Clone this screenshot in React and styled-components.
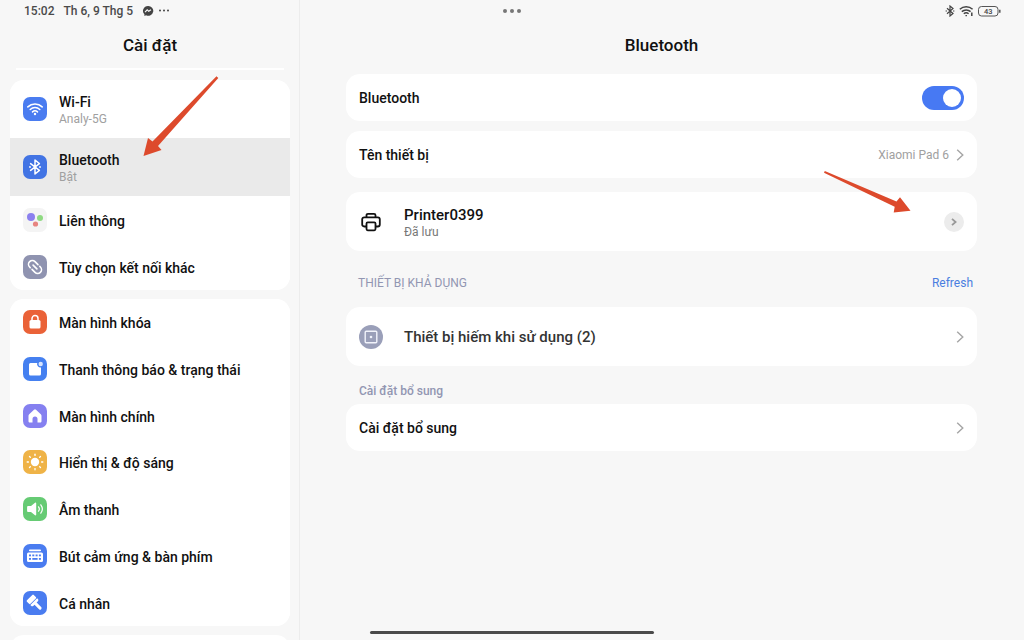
import React, { useState } from 'react'

import styled, { createGlobalStyle } from 'styled-components'

const GlobalStyle = createGlobalStyle`
    * {
        box-sizing: border-box;
    }
    body {
        margin: 0;
        background-color: #f7f7f7;
        font-family: Roboto, "Noto Sans", sans-serif;
        color: #111;
    }
    button, input {
        font-family: inherit;
        color: inherit;
    }
`
const Page = styled.div`
    position: relative;
    display: grid;
    grid-template-columns: 300px 1fr;
    height: 100vh;
    overflow: hidden;
`
const Sidebar = styled.aside`
    display: flex;
    flex-direction: column;
    padding: 0 9px 0 10px;
    border-right: 1px solid #ececec;
    overflow: hidden;
`
const Main = styled.main`
    display: flex;
    flex-direction: column;
    padding: 0 47px 0 46px;
    overflow: hidden;
`
const StatusBar = styled.div`
    display: flex;
    flex: none;
    align-items: center;
    justify-content: ${props => props.$end ? 'flex-end' : 'flex-start'};
    gap: ${props => props.$end ? '4px' : '9px'};
    height: 22px;
    padding-left: 14px;
    margin-right: ${props => props.$end ? '-24px' : '0'};
    font-size: 12px;
    font-weight: 500;
    color: #4a4a4a;
`
const Title = styled.h1`
    flex: none;
    margin: 0;
    padding-top: 1px;
    font-size: 17px;
    font-weight: 500;
    line-height: 45px;
    text-align: center;
`
const Divider = styled.hr`
    flex: none;
    width: calc(100% - 12px);
    height: 2px;
    margin: 0 auto 10px;
    border: none;
    background-color: #fff;
`
const Nav = styled.nav`
    display: flex;
    flex-direction: column;
    flex: none;
    gap: 9px;
`
const NavGroup = styled.div`
    display: grid;
    grid-auto-rows: ${props => props.$even ? '1fr' : 'auto'};
    min-height: ${props => props.$even ? '327px' : '40px'};
    border-radius: 14px;
    background-color: #fff;
    overflow: hidden;
`
const NavItem = styled.a`
    display: flex;
    align-items: center;
    gap: 12px;
    min-height: ${props => props.$tall ? '58px' : '46px'};
    padding: 0 13px;
    background-color: ${props => props.$active ? '#eaeaea' : '#fff'};
    color: inherit;
    text-decoration: none;
`
const Tile = styled.span`
    display: flex;
    width: 24px;
    height: 24px;
    border-radius: ${props => props.$round ? '50%' : '7px'};
    background-color: ${props => props.$color};
`
const Text = styled.span`
    display: flex;
    flex-direction: column;
    flex: 1;
    text-align: left;
`
const NavText = styled(Text)`
    padding-top: 2px;
`
const Label = styled.span`
    font-size: ${props => props.$large ? '15px' : '14px'};
    font-weight: 500;
    line-height: 18px;
    color: ${props => props.$soft ? '#333' : '#111'};
`
const Note = styled.span`
    font-size: 12px;
    line-height: 16px;
    color: ${props => props.$dark ? '#777' : '#a0a0a0'};
`
const Panel = styled.section`
    display: flex;
    flex-direction: column;
    flex: none;
    padding-top: 6px;
`
const Row = styled.div`
    display: flex;
    align-items: center;
    width: 100%;
    min-height: ${props => props.$tall ? '59px' : '47px'};
    margin: 0 0 ${props => props.$gap || '0'};
    padding: 0 13px;
    border: none;
    border-radius: 14px;
    background-color: #fff;
`
const RowIcon = styled.span`
    display: flex;
    justify-content: center;
    width: 24px;
    margin-right: 21px;
`
const Value = styled.span`
    margin-right: 7px;
    font-size: 12px;
    color: #a0a0a0;
`
const Switch = styled.input`
    display: flex;
    align-items: center;
    justify-content: ${props => props.checked ? 'flex-end' : 'flex-start'};
    appearance: none;
    width: 42px;
    height: 24px;
    margin: 0;
    padding: 0 3px;
    border-radius: 12px;
    background-color: ${props => props.checked ? '#4779f3' : '#ddd'};
    cursor: pointer;
    &::before {
        content: '';
        width: 18px;
        height: 18px;
        border-radius: 50%;
        background-color: #fff;
    }
`
const Details = styled.button`
    display: flex;
    align-items: center;
    justify-content: center;
    width: 20px;
    height: 20px;
    padding: 0;
    border: none;
    border-radius: 50%;
    background-color: #ececec;
    cursor: pointer;
`
const SectionHead = styled.div`
    display: flex;
    align-items: center;
    justify-content: space-between;
    padding: ${props => props.$small ? '16px 13px 4px' : '24px 4px 16px 12px'};
`
const SectionTitle = styled.h2`
    margin: 0;
    font-size: 12px;
    font-weight: ${props => props.$bold ? 500 : 400};
    line-height: ${props => props.$bold ? '18px' : '16px'};
    color: #9296b2;
`
const Refresh = styled.button`
    padding: 0;
    border: none;
    background: none;
    font-size: 12px;
    line-height: 16px;
    color: #4a7ee0;
    cursor: pointer;
`
const WindowDots = styled.div`
    position: absolute;
    top: 9px;
    left: 50%;
    display: flex;
    gap: 3px;
    transform: translateX(-50%);
    & > i {
        width: 4px;
        height: 4px;
        border-radius: 50%;
        background-color: #777;
    }
`
const HomeBar = styled.div`
    position: absolute;
    bottom: 6px;
    left: 50%;
    width: 284px;
    height: 3px;
    border-radius: 2px;
    background-color: #4a4a4a;
    transform: translateX(-50%);
`
const Pointer = styled.svg`
    position: absolute;
    top: ${props => props.$top};
    left: ${props => props.$left};
    right: ${props => props.$right};
    fill: #dd4a2c;
    pointer-events: none;
`

const Glyph = ({ children }) => (
    <svg width="24" height="24" viewBox="0 0 24 24" fill="none" aria-hidden="true">{children}</svg>
)

const stroke = { stroke: '#fff', strokeLinecap: 'round', strokeLinejoin: 'round' }

const WifiIcon = () => (
    <Glyph>
        <g {...stroke} strokeWidth="1.5">
            <path d="M4.8 9.9a10.4 10.4 0 0 1 14.4 0" />
            <path d="M7.2 12.5a7 7 0 0 1 9.6 0" />
            <path d="M9.5 14.9a3.7 3.7 0 0 1 5 0" />
        </g>
        <circle cx="12" cy="17" r="1.2" fill="#fff" />
    </Glyph>
)

const BluetoothIcon = () => (
    <Glyph>
        <path {...stroke} strokeWidth="1.5" d="M7.6 8.6l8.8 6.8-4.4 3.6V5l4.4 3.600-8.800 6.800" />
        <circle cx="7" cy="12" r=".9" fill="#fff" />
        <circle cx="17" cy="12" r=".9" fill="#fff" />
    </Glyph>
)

const DotsIcon = () => (
    <Glyph>
        <circle cx="8" cy="9" r="4" fill="#8b80ee" />
        <circle cx="17" cy="10" r="3" fill="#8fda82" />
        <circle cx="12.5" cy="16" r="2.6" fill="#e78480" />
    </Glyph>
)

const LinkIcon = () => (
    <Glyph>
        <g {...stroke} strokeWidth="1.6" transform="rotate(45 12 12)">
            <path d="M12.4 8.200H8.200a3.800 3.800 0 0 0 0 7.600h.8" />
            <path d="M11.600 15.800h4.200a3.800 3.800 0 0 0 0-7.600H15" />
            <path d="M9.300 12h5.400" />
        </g>
    </Glyph>
)

const LockIcon = () => (
    <Glyph>
        <path {...stroke} strokeWidth="1.5" d="M9 11V8.600a3 3 0 0 1 6 0V11" />
        <rect x="6.500" y="10" width="11" height="8.500" rx="1.600" fill="#fff" />
    </Glyph>
)

const NoticeIcon = () => (
    <Glyph>
        <path fill="#fff" d="M7.500 6h6.700a3.600 3.600 0 0 0 3.800 4.600V17a1.500 1.500 0 0 1-1.500 1.500h-9A1.500 1.500 0 0 1 6 17V7.500A1.500 1.500 0 0 1 7.500 6z" />
        <circle cx="17.700" cy="7" r="2.200" fill="#d8e5ff" />
    </Glyph>
)

const HomeIcon = () => (
    <Glyph>
        <path fill="#fff" d="M11 5.800a1.500 1.500 0 0 1 2 0l4.800 4.400c.4.400.7.900.7 1.500v5.500c0 .8-.6 1.300-1.300 1.300h-2.700V15a2.500 2.500 0 0 0-5 0v3.500H6.800c-.7 0-1.300-.5-1.300-1.300v-5.500c0-.6.3-1.100.7-1.500z" />
    </Glyph>
)

const SunIcon = () => (
    <Glyph>
        <circle cx="12" cy="12" r="4.200" fill="#fff" />
        <g {...stroke} strokeWidth="1.300">
            {[0, 45, 90, 135, 180, 225, 270, 315].map(angle => (
                <path key={angle} d="M12 4.200v1.200" transform={`rotate(${angle} 12 12)`} />
            ))}
        </g>
    </Glyph>
)

const SoundIcon = () => (
    <Glyph>
        <path fill="#fff" d="M5 9h3l4-3.300c.5-.4 1.200 0 1.200.6v11.400c0 .6-.7 1-1.200.6L8 15H5c-.5 0-.9-.4-.9-.9V9.900c0-.5.4-.9.9-.9z" />
        <g {...stroke} strokeWidth="1.200">
            <path d="M15.500 9.800a3.600 3.600 0 0 1 0 4.400" />
            <path d="M17.800 7.800a7 7 0 0 1 0 8.400" />
        </g>
    </Glyph>
)

const KeyboardIcon = () => (
    <Glyph>
        <rect x="6" y="5.500" width="12" height="1.700" rx=".8" fill="#fff" />
        <rect x="4" y="8.500" width="16" height="9.500" rx="1.500" fill="#fff" />
        <g fill="#4a7cf0">
            {[6, 9.3, 12.6, 15.9].map(x => (
                <rect key={x} x={x} y="10.500" width="2" height="1.800" />
            ))}
            <rect x="6" y="14" width="2" height="1.800" />
            <rect x="9.300" y="14" width="5.300" height="1.800" />
            <rect x="15.900" y="14" width="2" height="1.800" />
        </g>
    </Glyph>
)

const BrushIcon = () => (
    <Glyph>
        <g fill="#fff" transform="rotate(-45 12 12)">
            <rect x="7.200" y="4.400" width="9.600" height="5" rx="1" />
            <path d="M7.200 10.200h9.600v1c0 1-.6 1.600-1.500 1.600h-1.800v6.400a1.500 1.500 0 0 1-3 0v-6.400H8.700c-.9 0-1.500-.6-1.500-1.600z" />
        </g>
    </Glyph>
)

const PrinterIcon = () => (
    <svg width="20" height="20" viewBox="0 0 20 20" fill="none" stroke="#111" strokeWidth="1.800" strokeLinejoin="round" aria-hidden="true">
        <path d="M5.500 5V3.300c0-.9.600-1.500 1.500-1.500h6c.9 0 1.500.6 1.500 1.500V5" />
        <path d="M5.500 14.500H3.200c-1.200 0-2-.8-2-2V7.300c0-1.200.8-2 2-2h13.600c1.200 0 2 .8 2 2v5.200c0 1.200-.8 2-2 2h-2.300" />
        <rect x="5.500" y="10.300" width="9" height="8" rx="1.200" />
    </svg>
)

const DeviceIcon = () => (
    <Glyph>
        <rect x="6.200" y="6.200" width="11.600" height="11.600" rx="1" stroke="#f1f3fb" strokeWidth="1.400" />
        <circle cx="12" cy="12" r="1.300" fill="#f1f3fb" />
    </Glyph>
)

const Chevron = () => (
    <svg width="8" height="12" viewBox="0 0 8 12" fill="none" stroke="#a5a5a5" strokeWidth="1.400" aria-hidden="true">
        <path d="M1.200.700L6.800 6l-5.600 5.300" />
    </svg>
)

const connections = [
    { label: 'Wi-Fi', note: 'Analy-5G', color: '#4a7cf0', icon: <WifiIcon /> },
    { label: 'Bluetooth', note: 'Bật', color: '#4274e4', icon: <BluetoothIcon />, active: true },
    { label: 'Liên thông', color: '#f4f4f4', icon: <DotsIcon /> },
    { label: 'Tùy chọn kết nối khác', color: '#8f93b0', icon: <LinkIcon /> },
]

const personal = [
    { label: 'Màn hình khóa', color: '#ea6238', icon: <LockIcon /> },
    { label: 'Thanh thông báo & trạng thái', color: '#4580f0', icon: <NoticeIcon /> },
    { label: 'Màn hình chính', color: '#8580f0', icon: <HomeIcon /> },
    { label: 'Hiển thị & độ sáng', color: '#efb347', icon: <SunIcon /> },
    { label: 'Âm thanh', color: '#66cb74', icon: <SoundIcon /> },
    { label: 'Bút cảm ứng & bàn phím', color: '#4a7cf0', icon: <KeyboardIcon /> },
    { label: 'Cá nhân', color: '#4a7cf0', icon: <BrushIcon /> },
]

const NavRow = ({ item }) => (
    <NavItem href="#" $tall={!!item.note} $active={item.active} aria-current={item.active ? 'page' : undefined}>
        <Tile $color={item.color}>{item.icon}</Tile>
        <NavText>
            <Label>{item.label}</Label>
            {item.note && <Note>{item.note}</Note>}
        </NavText>
    </NavItem>
)

const ConnectionGroup = styled(NavGroup)`
    grid-template-rows: auto auto 47px 47px;
`

const App = () => {
    const [enabled, setEnabled] = useState(true);

    return (
        <Page>
            <GlobalStyle />

            <Sidebar>
                <StatusBar>
                    <span>15:02</span>
                    <span>Th 6, 9 Thg 5</span>
                    <svg width="28" height="12" viewBox="0 0 28 12" fill="#444" aria-hidden="true">
                        <path d="M6 1a5 4.900 0 0 0-3.600 8.300V11l1.700-.7A5 4.900 0 1 0 6 1z" />
                        <path d="M3 7.200l2.200-2.300 1.500 1.300L9 4.800" fill="none" stroke="#f7f7f7" strokeWidth="1.200" />
                        <circle cx="18" cy="5.500" r="1" />
                        <circle cx="22" cy="5.500" r="1" />
                        <circle cx="26" cy="5.500" r="1" />
                    </svg>
                </StatusBar>
                <Title>Cài đặt</Title>
                <Divider />
                <Nav>
                    <ConnectionGroup>
                        {connections.map(item => <NavRow key={item.label} item={item} />)}
                    </ConnectionGroup>
                    <NavGroup $even>
                        {personal.map(item => <NavRow key={item.label} item={item} />)}
                    </NavGroup>
                    <NavGroup />
                </Nav>
            </Sidebar>

            <Main>
                <StatusBar $end>
                    <svg width="10" height="12" viewBox="0 0 10 12" fill="none" stroke="#444" strokeWidth="1.200" aria-hidden="true">
                        <path d="M2 3.300l6 5.200-3 2.500V1l3 2.500-6 5.200" />
                        <path d="M.6 6h1.400M8 6h1.400" />
                    </svg>
                    <svg width="15" height="12" viewBox="0 0 15 12" fill="none" stroke="#444" strokeWidth="1.500" aria-hidden="true">
                        <path d="M.8 4.300a9.500 9.500 0 0 1 12.800 0" />
                        <path d="M2.800 6.600a6.500 6.500 0 0 1 8.800 0" />
                        <path d="M4.800 8.800a3.500 3.500 0 0 1 4.800 0" />
                        <path d="M7.200 10v1.300M12.800 7.500v3.500" />
                    </svg>
                    <svg width="23" height="11" viewBox="0 0 23 11" fill="none" stroke="#555" aria-hidden="true">
                        <rect x=".5" y=".5" width="19.500" height="9.500" rx="3" />
                        <path d="M21.800 3.800v3" strokeWidth="1.500" />
                        <text x="10.300" y="8" textAnchor="middle" fontSize="7.500" fill="#444" stroke="none">43</text>
                    </svg>
                </StatusBar>
                <Title as="h2">Bluetooth</Title>

                <Panel>
                    <Row as="label" $gap="10px">
                        <Text><Label>Bluetooth</Label></Text>
                        <Switch type="checkbox" role="switch" checked={enabled} onChange={e => setEnabled(e.target.checked)} />
                    </Row>
                    <Row as="button" $gap="14px">
                        <Text><Label>Tên thiết bị</Label></Text>
                        <Value>Xiaomi Pad 6</Value>
                        <Chevron />
                    </Row>
                    <Row $tall>
                        <RowIcon><PrinterIcon /></RowIcon>
                        <NavText>
                            <Label $large>Printer0399</Label>
                            <Note $dark>Đã lưu</Note>
                        </NavText>
                        <Details aria-label="Printer0399">
                            <svg width="6" height="8" viewBox="0 0 6 8" fill="none" stroke="#999" strokeWidth="1.800" aria-hidden="true">
                                <path d="M1 .8L4.600 4 1 7.200" />
                            </svg>
                        </Details>
                    </Row>

                    <SectionHead>
                        <SectionTitle>THIẾT BỊ KHẢ DỤNG</SectionTitle>
                        <Refresh>Refresh</Refresh>
                    </SectionHead>
                    <Row as="button" $tall>
                        <RowIcon><Tile $round $color="#9a9fb9"><DeviceIcon /></Tile></RowIcon>
                        <Text><Label $large $soft>Thiết bị hiếm khi sử dụng (2)</Label></Text>
                        <Chevron />
                    </Row>

                    <SectionHead $small>
                        <SectionTitle $bold>Cài đặt bổ sung</SectionTitle>
                    </SectionHead>
                    <Row as="button">
                        <Text><Label>Cài đặt bổ sung</Label></Text>
                        <Chevron />
                    </Row>
                </Panel>
            </Main>

            <WindowDots><i /><i /><i /></WindowDots>
            <HomeBar />
            <Pointer $top="75px" $left="142px" width="78" height="84" viewBox="0 0 78 84" aria-hidden="true">
                <path d="M74.500 1.300l1.800 1.700L16 71l3.500 4L1.500 81 6 63l4.500 3.500z" />
            </Pointer>
            <Pointer $top="170px" $right="112px" width="90" height="46" viewBox="0 0 90 46" aria-hidden="true">
                <path d="M2.800.900L74.500 31.500l3.500-4.200 10.500 13.500L71.700 42.500l1-5.800L2 2.800z" />
            </Pointer>
        </Page>
    )
}

export default App
